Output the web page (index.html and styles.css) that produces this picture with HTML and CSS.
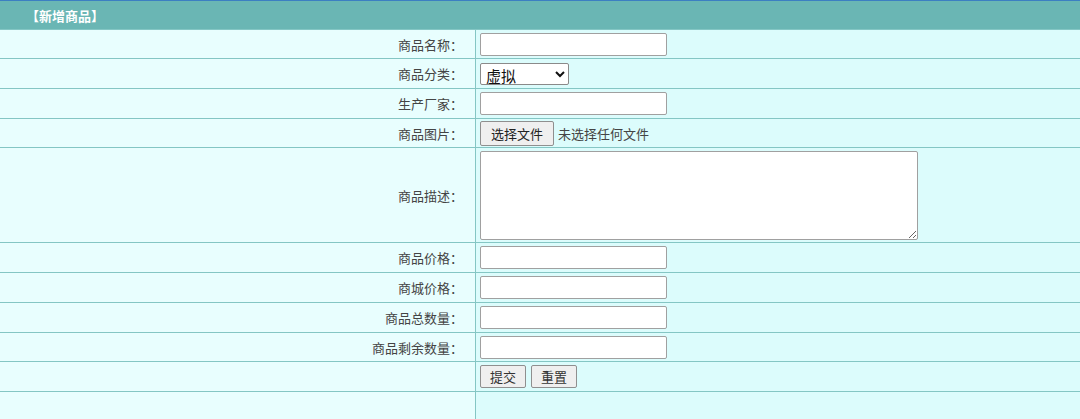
FILE: index.html
```html
<!DOCTYPE html>
<html lang="zh">
<head>
<meta charset="utf-8">
<title>新增商品</title>
<link rel="stylesheet" href="styles.css">
</head>
<body>
<table class="form-table">
  <tr class="head-row">
    <th colspan="2" class="head">【新增商品】</th>
  </tr>
  <tr class="short">
    <td class="label">商品名称：</td>
    <td class="field"><input class="txt" type="text"></td>
  </tr>
  <tr>
    <td class="label">商品分类：</td>
    <td class="field"><select class="sel"><option>虚拟</option></select></td>
  </tr>
  <tr>
    <td class="label">生产厂家：</td>
    <td class="field"><input class="txt" type="text"></td>
  </tr>
  <tr class="short">
    <td class="label">商品图片：</td>
    <td class="field"><span class="file"><button class="file-btn" type="button">选择文件</button><span class="file-name">未选择任何文件</span></span></td>
  </tr>
  <tr class="tall">
    <td class="label">商品描述：</td>
    <td class="field"><textarea class="area"></textarea></td>
  </tr>
  <tr>
    <td class="label">商品价格：</td>
    <td class="field"><input class="txt" type="text"></td>
  </tr>
  <tr>
    <td class="label">商城价格：</td>
    <td class="field"><input class="txt" type="text"></td>
  </tr>
  <tr>
    <td class="label">商品总数量：</td>
    <td class="field"><input class="txt" type="text"></td>
  </tr>
  <tr class="short">
    <td class="label">商品剩余数量：</td>
    <td class="field"><input class="txt" type="text"></td>
  </tr>
  <tr>
    <td class="label"></td>
    <td class="field"><button class="btn" type="button">提交</button><button class="btn" type="button">重置</button></td>
  </tr>
  <tr class="last">
    <td class="label"></td>
    <td class="field"></td>
  </tr>
</table>
</body>
</html>
```

FILE: styles.css
```css
html, body {
  margin: 0;
  padding: 0;
  background: #dcfcfc;
}
body {
  font-family: "Noto Sans CJK SC", "Noto Sans", sans-serif;
  font-size: 13px;
  color: #333;
}
.form-table {
  width: 100%;
  border-collapse: collapse;
  border-top: 1px solid #3c7fc2;
}
.head-row th {
  height: 28px;
}
.head {
  background: #6ab6b4;
  color: #fff;
  font-weight: bold;
  text-align: left;
  padding: 0 0 0 26px;
  border-bottom: 1px solid #84c6c4;
  font-size: 13px;
}
td {
  border-top: 1px solid #84c6c4;
  border-bottom: 1px solid #84c6c4;
  padding: 0;
  height: 29px;
}
tr.short td {
  height: 28px;
}
tr.tall td {
  height: 94px;
}
tr.last td {
  height: 28px;
  border-bottom: none;
}
.label {
  width: 463px;
  background: #e8fefe;
  text-align: right;
  padding-right: 12px;
  border-right: 1px solid #84c6c4;
  color: #444;
}
.field {
  background: #dcfcfc;
  padding-left: 4px;
  text-align: left;
}
.txt {
  box-sizing: border-box;
  width: 187px;
  height: 23px;
  margin: 0;
  display: block;
  border: 1px solid #a0a0a0;
  border-radius: 2px;
  background: #fff;
}
.sel {
  box-sizing: border-box;
  width: 89px;
  height: 22px;
  margin: 0;
  display: block;
  font-family: "Noto Sans CJK SC", sans-serif;
  font-size: 15px;
  color: #111;
  border: 1px solid #8a8a8a;
  border-radius: 2px;
  background: #fff;
  padding: 0 0 0 1px;
}
.file {
  display: flex;
  align-items: center;
}
.file-btn {
  box-sizing: border-box;
  height: 25px;
  width: 74px;
  margin: 0;
  padding: 0;
  font-family: "Noto Sans CJK SC", sans-serif;
  font-size: 13px;
  color: #222;
  background: #efefef;
  border: 1px solid #8f8f8f;
  border-radius: 2px;
}
.file-name {
  margin-left: 4px;
  color: #444;
}
.area {
  box-sizing: border-box;
  display: block;
  width: 438px;
  height: 89px;
  margin: 0;
  border: 1px solid #a0a0a0;
  border-radius: 2px;
  background: #fff;
}
.btn {
  box-sizing: border-box;
  height: 23px;
  width: 46px;
  margin: 0 5px 0 0;
  padding: 0;
  font-family: "Noto Sans CJK SC", sans-serif;
  font-size: 13px;
  color: #333;
  background: #efefef;
  border: 1px solid #8f8f8f;
  border-radius: 2px;
  vertical-align: middle;
}
```
